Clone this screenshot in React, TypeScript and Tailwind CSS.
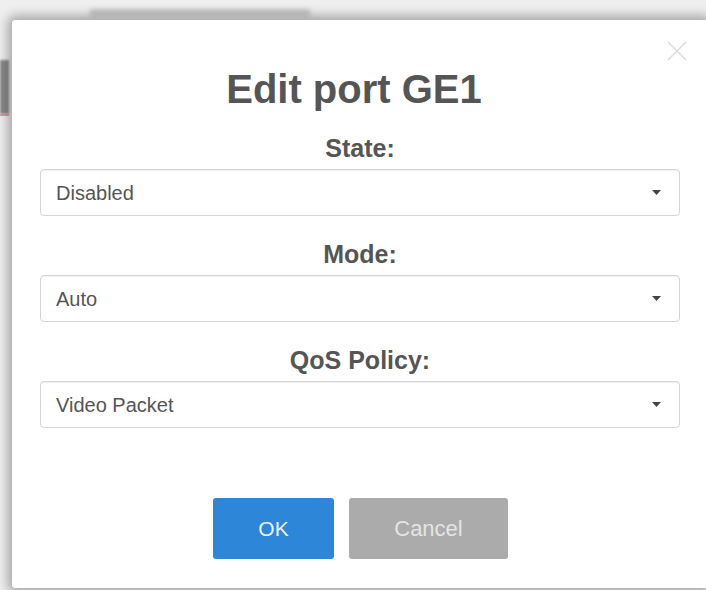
const fields = [
  { label: 'State:', value: 'Disabled' },
  { label: 'Mode:', value: 'Auto' },
  { label: 'QoS Policy:', value: 'Video Packet' },
];

function SelectBox({ value }: { value: string }) {
  return (
    <div className="mt-[6px] h-[47px] rounded-[4px] border border-[#d4d4d4] bg-white flex items-center justify-between pl-[15px] pr-[18px] shadow-[inset_0_1px_1px_rgba(0,0,0,0.06)]">
      <span className="text-[20px] text-[#555]">{value}</span>
      <svg width="9" height="5" viewBox="0 0 9 5" className="text-[#444]">
        <path d="M0 0 L9 0 L4.5 5 Z" fill="currentColor" />
      </svg>
    </div>
  );
}

export default function App() {
  return (
    <div
      className="w-[706px] h-[590px] overflow-hidden bg-[#efefef] flex flex-col"
      style={{ fontFamily: '"Liberation Sans", Arial, sans-serif' }}
    >
      {/* page behind the dialog */}
      <div className="h-[20px] shrink-0 pl-[90px] pt-[9px]">
        <div className="w-[220px] h-[7px] bg-[#c8c8c8] blur-[2px]" />
      </div>

      <div className="flex">
        <div className="w-[12px] shrink-0 pt-[40px]">
          <div className="w-[9px] h-[54px] bg-[#8a8a8a] blur-[1px]" />
          <div className="w-[9px] h-[2px] bg-[#e8a0a8]" />
        </div>

        <div className="relative w-[696px] h-[568px] shrink-0 bg-white rounded-[3px] shadow-[0_0_12px_4px_rgba(0,0,0,0.33)] px-[28px] pt-[46px]">
          <button className="absolute right-[20px] top-[20px] w-[22px] h-[22px] text-[#dedede]">
            <svg width="22" height="22" viewBox="0 0 22 22">
              <path d="M2 2 L20 20 M20 2 L2 20" stroke="currentColor" strokeWidth="1.6" />
            </svg>
          </button>

          <h1 className="text-center pr-[12px] text-[40px] leading-[46px] font-bold text-[#555]">Edit port GE1</h1>

          <div className="mt-[21px] flex flex-col gap-[23px]">
            {fields.map((f) => (
              <div key={f.label}>
                <div className="text-center text-[25px] leading-[30px] font-bold text-[#555]">{f.label}</div>
                <SelectBox value={f.value} />
              </div>
            ))}
          </div>

          <div className="mt-[70px] flex justify-center gap-[15px] pl-[1px]">
            <button className="w-[121px] h-[61px] rounded-[3px] bg-[#2e86d8] text-[21px] text-[#eaf2fb]">OK</button>
            <button className="w-[159px] h-[61px] rounded-[3px] bg-[#ababab] text-[22px] text-[#e4e4e4]">Cancel</button>
          </div>
        </div>
      </div>
    </div>
  );
}
